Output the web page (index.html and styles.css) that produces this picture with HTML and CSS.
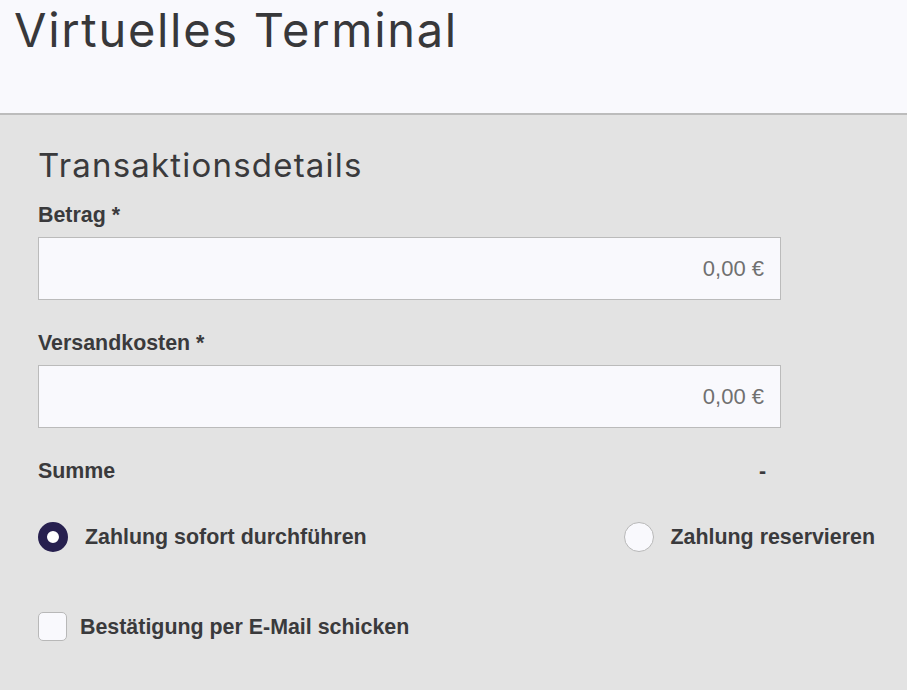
FILE: index.html
```html
<!DOCTYPE html>
<html lang="de">
<head>
<meta charset="utf-8">
<title>Virtuelles Terminal</title>
<link rel="stylesheet" href="styles.css">
</head>
<body>
<header class="page-header">
  <h1 class="page-title">Virtuelles Terminal</h1>
</header>
<main class="panel">
  <h2 class="section-title">Transaktionsdetails</h2>
  <div class="field">
    <label class="field-label">Betrag *</label>
    <div class="input"><span class="input-value">0,00 €</span></div>
  </div>
  <div class="field">
    <label class="field-label">Versandkosten *</label>
    <div class="input"><span class="input-value">0,00 €</span></div>
  </div>
  <div class="sum-row">
    <span class="sum-label">Summe</span>
    <span class="sum-value">-</span>
  </div>
  <div class="radio-row">
    <div class="option">
      <span class="radio radio-checked"></span>
      <span class="option-label">Zahlung sofort durchführen</span>
    </div>
    <div class="option">
      <span class="radio"></span>
      <span class="option-label">Zahlung reservieren</span>
    </div>
  </div>
  <div class="check-row">
    <span class="checkbox"></span>
    <span class="option-label">Bestätigung per E-Mail schicken</span>
  </div>
</main>
</body>
</html>
```

FILE: styles.css
```css
* { box-sizing: border-box; }
html, body { margin: 0; padding: 0; }
body {
  width: 907px;
  height: 690px;
  overflow: hidden;
  background: #e3e3e3;
  font-family: "Liberation Sans", Arial, sans-serif;
  color: #3a3a3c;
}
.page-header {
  height: 115px;
  background: #f9f9fd;
  border-bottom: 2px solid #bcbcbc;
  padding: 0 0 0 14px;
}
.page-title {
  margin: 0;
  font-family: Inter, "Open Sans", sans-serif;
  font-weight: 400;
  font-size: 47px;
  line-height: 60px;
  letter-spacing: 1.7px;
  color: #38383a;
}
.panel {
  padding: 30px 0 0 38px;
}
.section-title {
  margin: 0;
  font-family: Inter, "Open Sans", sans-serif;
  font-weight: 400;
  font-size: 33px;
  line-height: 40px;
  letter-spacing: 1.2px;
  color: #3a3a3c;
}
.field { width: 743px; }
.field-label {
  display: block;
  margin-top: 17px;
  font-weight: 700;
  font-size: 21.4px;
  line-height: 26px;
}
.field + .field .field-label { margin-top: 30px; }
.input {
  margin-top: 9px;
  height: 63px;
  background: #f9f9fd;
  border: 1px solid #bbbbbb;
  display: flex;
  align-items: center;
  justify-content: flex-end;
  padding-right: 16px;
}
.input-value {
  font-size: 22px;
  color: #707070;
}
.sum-row {
  margin-top: 30px;
  width: 728px;
  display: flex;
  justify-content: space-between;
  font-weight: 700;
  font-size: 21.4px;
  line-height: 26px;
}
.radio-row {
  margin-top: 38px;
  width: 837px;
  display: flex;
  justify-content: space-between;
  align-items: center;
}
.option {
  display: flex;
  align-items: center;
}
.radio {
  width: 30px;
  height: 30px;
  border-radius: 50%;
  background: #f9f9fd;
  border: 1px solid #b8b8b8;
  margin-right: 17px;
}
.radio-checked {
  background: #ffffff;
  border: 9px solid #27204f;
}
.option-label {
  font-weight: 700;
  font-size: 21.4px;
  line-height: 26px;
}
.check-row {
  margin-top: 60px;
  display: flex;
  align-items: center;
}
.checkbox {
  width: 29px;
  height: 29px;
  border-radius: 5px;
  background: #f9f9fd;
  border: 1px solid #b8b8b8;
  margin-right: 13px;
}
```
